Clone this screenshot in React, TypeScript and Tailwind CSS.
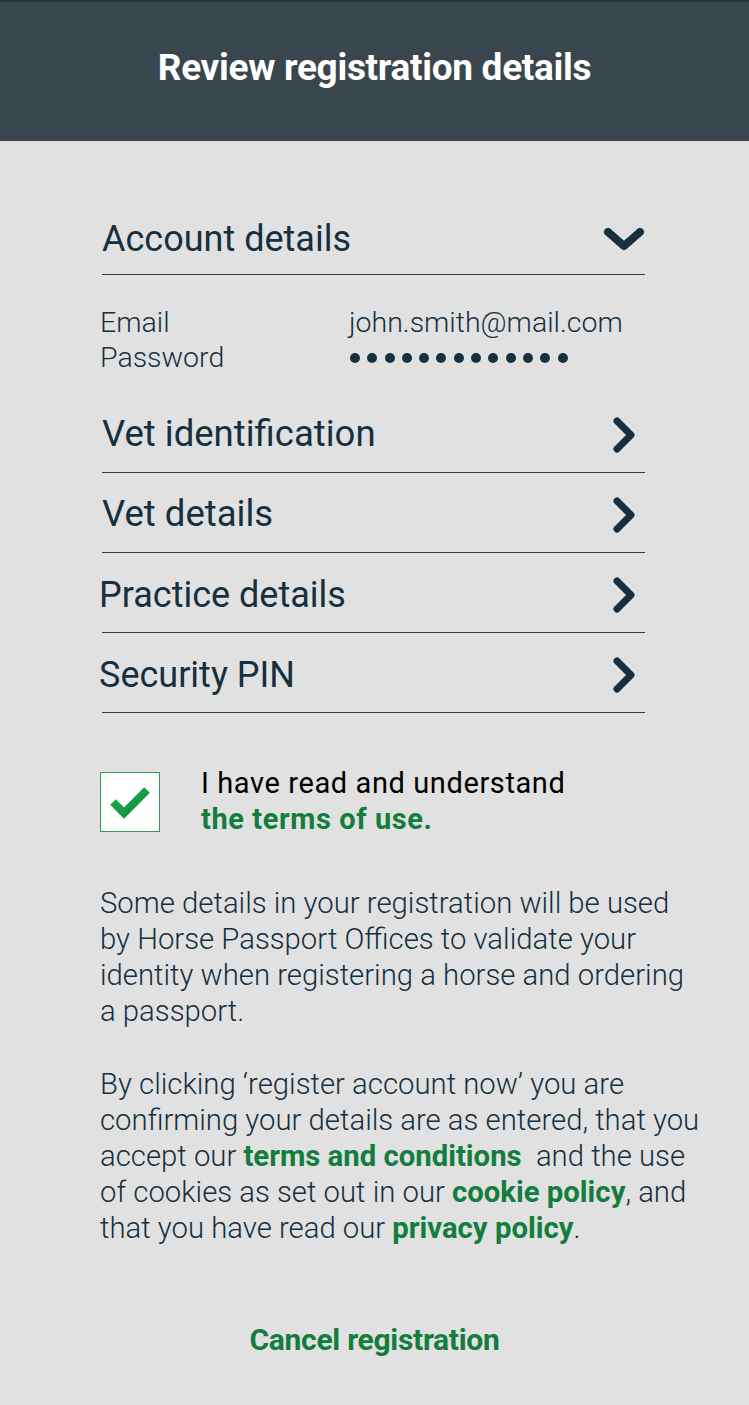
import React from 'react';

const ChevronRight = () => (
  <svg width="28" height="38" viewBox="0 0 28 38" className="shrink-0 mr-[6px]">
    <polyline points="6,5 20,19 6,33" fill="none" stroke="#16303f" strokeWidth="7" strokeLinecap="round" strokeLinejoin="round" />
  </svg>
);

const ChevronDown = () => (
  <svg width="42" height="26" viewBox="0 0 42 26" className="shrink-0">
    <polyline points="5,5 21,19 37,5" fill="none" stroke="#16303f" strokeWidth="8" strokeLinecap="round" strokeLinejoin="round" />
  </svg>
);

const Section = ({ title, shift }: { title: string; shift?: boolean }) => (
  <div className="flex items-center justify-between h-[80px] border-b border-[#2c3f4b] pt-1">
    <span className={shift ? 'text-[36px] text-[#16303f] -ml-[3px]' : 'text-[36.5px] text-[#16303f]'}>{title}</span>
    <ChevronRight />
  </div>
);

export default function App() {
  return (
    <div className="min-h-screen w-full bg-[#e1e1e1] font-['Roboto',sans-serif] text-[#16303f]">
      {/* header */}
      <div className="h-[141px] bg-[#3a464d] border-t-2 border-[#22333d] flex items-center justify-center">
        <h1 className="text-[37px] font-bold text-white tracking-[-0.3px] -mt-2">Review registration details</h1>
      </div>

      <div className="px-[100px] pt-[72px]">
        {/* account details */}
        <div className="ml-[2px] mr-[4px]">
          <div className="flex items-center justify-between h-[62px] border-b border-[#2c3f4b] pb-2">
            <span className="text-[36px] -mt-[2px]">Account details</span>
            <ChevronDown />
          </div>
          <div className="grid grid-cols-[249px_1fr] items-center text-[28.5px] font-light leading-[35px] pt-[30px] pb-[18px] -ml-[2px]">
            <span>Email</span>
            <span>john.smith@mail.com</span>
            <span>Password</span>
            <div className="flex gap-[7.3px] pl-[1px]">
              {Array.from({ length: 13 }).map((_, i) => (
                <span key={i} className="w-[10px] h-[10px] rounded-full bg-[#16303f]" />
              ))}
            </div>
          </div>
          <Section title="Vet identification" />
          <Section title="Vet details" />
          <Section title="Practice details" shift />
          <Section title="Security PIN" shift />
        </div>

        {/* terms checkbox */}
        <div className="flex items-start gap-[41px] mt-[59px]">
          <div className="w-[60px] h-[60px] bg-white border border-[#2a9a52] flex items-center justify-center shrink-0">
            <svg width="44" height="36" viewBox="0 0 44 36">
              <defs>
                <linearGradient id="chk" x1="0" y1="0" x2="1" y2="1">
                  <stop offset="0" stopColor="#20b04e" />
                  <stop offset="1" stopColor="#0f8a3c" />
                </linearGradient>
              </defs>
              <polyline points="5,18 16,29 39,6" fill="none" stroke="url(#chk)" strokeWidth="8" strokeLinejoin="miter" />
            </svg>
          </div>
          <div className="text-[29px] leading-[36px] tracking-[0.6px] -mt-[7px]">
            <div className="text-black">I have read and understand</div>
            <div className="font-bold text-[#137d3e]">the terms of use.</div>
          </div>
        </div>

        {/* info text */}
        <div className="text-[29.3px] font-light leading-[36px] mt-[48px] -mr-[52px]">
          <p>
            Some details in your registration will be used by Horse Passport Offices to validate your identity when registering a horse and ordering a passport.
          </p>
          <p className="mt-[37px]">
            By clicking ‘register account now’ you are confirming your details are as entered, that you accept our{' '}
            <span className="font-bold text-[#137d3e]">terms and conditions</span>
            {'\u00a0 '}and the use of cookies as set out in our <span className="font-bold text-[#137d3e]">cookie policy</span>, and that you have read our{' '}
            <span className="font-bold text-[#137d3e]">privacy policy</span>.
          </p>
        </div>

        <div className="text-center mt-[71px] pb-[46px]">
          <span className="text-[30px] font-bold text-[#137d3e] tracking-[-0.3px]">Cancel registration</span>
        </div>
      </div>
    </div>
  );
}
